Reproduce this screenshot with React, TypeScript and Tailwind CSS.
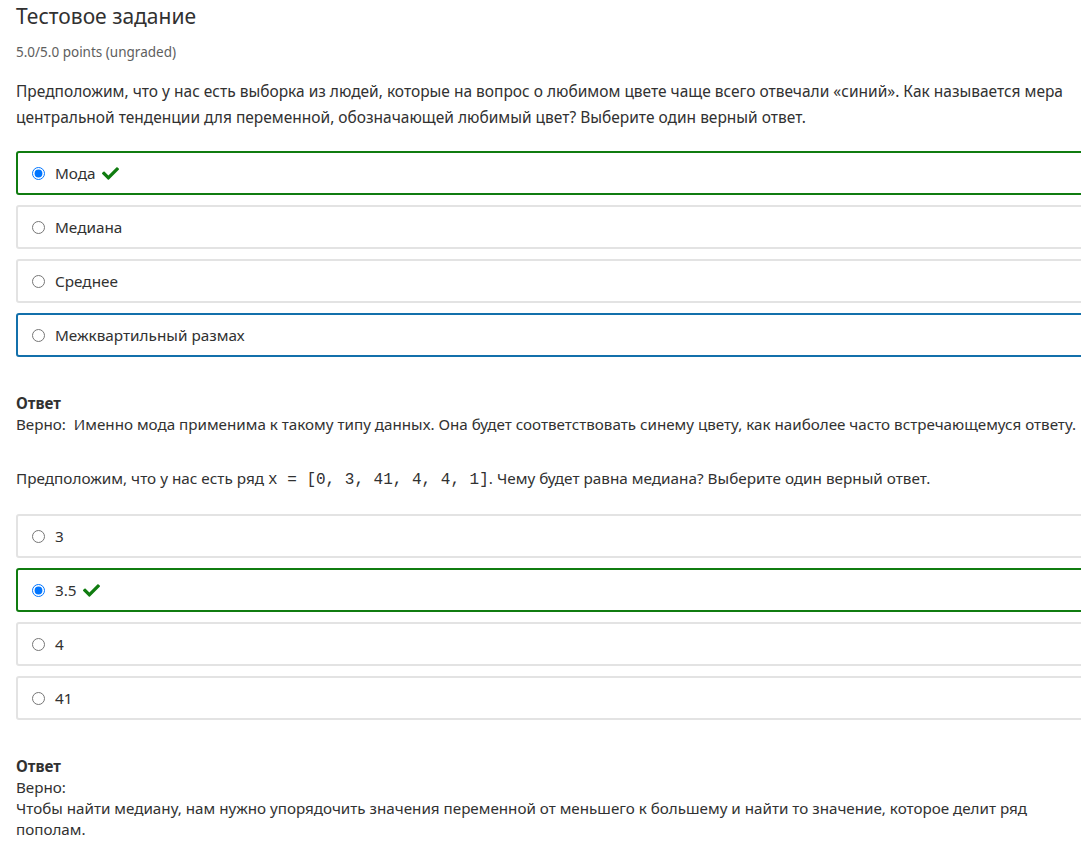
import { FaCheck } from "react-icons/fa";

type Opt = { label: string; state?: "correct" | "focus" };

const Option = ({ label, state }: Opt) => {
  const border =
    state === "correct"
      ? "border-[#107c10]"
      : state === "focus"
      ? "border-[#1370ab]"
      : "border-[#e3e3e3]";
  return (
    <div
      className={`flex h-[44px] items-center rounded-[3px] border-2 bg-white pl-[14px] ${border}`}
    >
      <input
        type="radio"
        readOnly
        checked={state === "correct"}
        className="m-0 h-[13px] w-[13px] accent-[#0075ff]"
      />
      <span className="ml-[10px] text-[15.3px] text-[#313131]">{label}</span>
      {state === "correct" && (
        <FaCheck className="ml-[6px] text-[#107c10]" size={17} />
      )}
    </div>
  );
};

const Options = ({ items }: { items: Opt[] }) => (
  <div className="flex flex-col gap-[10px]">
    {items.map((o) => (
      <Option key={o.label} {...o} />
    ))}
  </div>
);

export default function App() {
  return (
    <div
      className="min-h-screen w-full overflow-hidden bg-white text-[#313131]"
      style={{ fontFamily: '"Noto Sans", "Open Sans", sans-serif' }}
    >
      <div className="w-[1096px] pl-4">
        <h1 className="pt-[2px] text-[21px] leading-[28px] text-[#313131]">
          Тестовое задание
        </h1>
        <div className="mt-[12px] text-[13.5px] leading-[20px] text-[#5e5e5e]">
          5.0/5.0 points (ungraded)
        </div>

        <p className="mt-[16px] text-[15.5px] leading-[26px]">
          Предположим, что у нас есть выборка из людей, которые на вопрос о
          любимом цвете чаще всего отвечали «синий». Как называется мера
          центральной тенденции для переменной, обозначающей любимый цвет?
          Выберите один верный ответ.
        </p>

        <div className="mt-[21px]">
          <Options
            items={[
              { label: "Мода", state: "correct" },
              { label: "Медиана" },
              { label: "Среднее" },
              { label: "Межквартильный размах", state: "focus" },
            ]}
          />
        </div>

        <div className="mt-[36px] whitespace-nowrap text-[15.2px] leading-[21px]">
          <div className="font-bold">Ответ</div>
          <div>
            Верно:&nbsp; Именно мода применима к такому типу данных. Она будет
            соответствовать синему цвету, как наиболее часто встречающемуся
            ответу.
          </div>
        </div>

        <p className="mt-[30px] text-[15.3px] leading-[26px]">
          Предположим, что у нас есть ряд{" "}
          <code
            className="text-[16px]"
            style={{ fontFamily: '"Liberation Mono", "Courier New", monospace' }}
          >
            x = [0, 3, 41, 4, 4, 1]
          </code>
          . Чему будет равна медиана? Выберите один верный ответ.
        </p>

        <div className="mt-[21px]">
          <Options
            items={[
              { label: "3" },
              { label: "3.5", state: "correct" },
              { label: "4" },
              { label: "41" },
            ]}
          />
        </div>

        <div className="mt-[36px] text-[15.2px] leading-[21px]">
          <div className="font-bold">Ответ</div>
          <div>Верно:</div>
          <div>
            Чтобы найти медиану, нам нужно упорядочить значения переменной от
            меньшего к большему и найти то значение, которое делит ряд пополам.
          </div>
        </div>
      </div>
    </div>
  );
}
